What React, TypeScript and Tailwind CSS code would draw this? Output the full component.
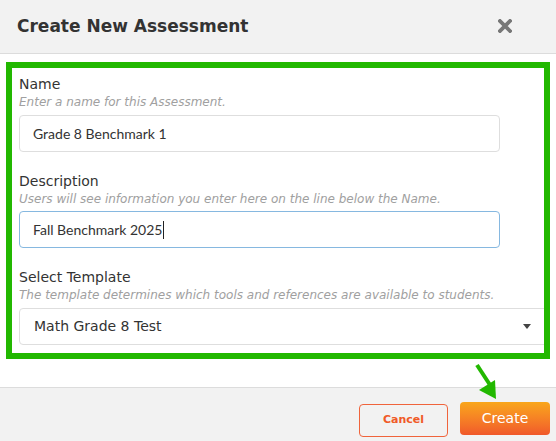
import React from 'react';

const Field: React.FC<{ label: string; hint: string; className?: string; children: React.ReactNode }> = ({
  label,
  hint,
  className,
  children,
}) => (
  <div className={className}>
    <div className="text-[14px] leading-[20px] text-[#333]">{label}</div>
    <div className="text-[12px] leading-[17px] italic text-[#a0a0a0]">{hint}</div>
    {children}
  </div>
);

const App: React.FC = () => {
  return (
    <div className="relative w-[556px] h-[441px] bg-white flex flex-col overflow-hidden font-['DejaVu_Sans',sans-serif]">
      {/* header */}
      <div className="h-[54px] shrink-0 bg-[#f2f2f2] border-b border-[#dcdcdc] flex items-center justify-between pl-[17px] pr-[44px]">
        <h2 className="text-[17px] font-bold text-[#333]">Create New Assessment</h2>
        <svg width="14" height="14" viewBox="0 0 14 14" className="mt-[-1px]">
          <path d="M2 2 L12 12 M12 2 L2 12" stroke="#777" strokeWidth="3.8" strokeLinecap="square" />
        </svg>
      </div>

      {/* body */}
      <div className="pt-2 px-[6px] pb-[28px]">
        <div className="border-[6px] border-[#22b800] pt-[6px] pl-[7px] pb-[8px] overflow-hidden">
          <Field label="Name" hint="Enter a name for this Assessment.">
            <div className="mt-[4px] w-[481px] h-[37px] border border-[#dedede] rounded-[4px] flex items-center pl-[13px] font-['Lato',sans-serif] text-[14px] text-[#333]">
              Grade 8 Benchmark 1
            </div>
          </Field>

          <Field
            className="mt-[19px]"
            label="Description"
            hint="Users will see information you enter here on the line below the Name."
          >
            <div className="mt-[3px] w-[481px] h-[37px] border border-[#86b8e0] rounded-[4px] flex items-center pl-[13px] font-['Lato',sans-serif] text-[14px] text-[#333]">
              Fall Benchmark 2025
              <span className="inline-block w-px h-[18px] bg-[#222] ml-[1px]" />
            </div>
          </Field>

          <Field
            className="mt-[19px]"
            label="Select Template"
            hint="The template determines which tools and references are available to students."
          >
            <div className="mt-[4px] w-[560px] h-[37px] border border-[#dedede] rounded-l-[4px] flex items-center pl-[14px] text-[14px] text-[#333]">
              Math Grade 8 Test
              <svg width="8" height="5" viewBox="0 0 8 5" className="ml-[361px]">
                <path d="M0 0 H8 L4 5 Z" fill="#444" />
              </svg>
            </div>
          </Field>
        </div>
      </div>

      {/* footer */}
      <div className="flex-1 bg-[#f2f2f2] border-t border-[#dcdcdc] flex justify-end items-start gap-3 pt-[14px] pr-[6px]">
        <button className="mt-[2px] w-[89px] h-[33px] border border-[#f0643c] rounded-[4px] bg-transparent text-[11px] font-bold text-[#f05a28]">
          Cancel
        </button>
        <button className="w-[90px] h-[33px] rounded-[4px] bg-gradient-to-b from-[#f9a61a] to-[#f0582a] text-[14px] text-white">
          Create
        </button>
      </div>

      {/* annotation arrow */}
      <svg className="absolute left-[470px] top-[360px]" width="36" height="44" viewBox="0 0 36 44">
        <path d="M7 5 L22 28" stroke="#22b800" strokeWidth="4" strokeLinecap="butt" />
        <path d="M9 30 L25 20 L26 39 Z" fill="#22b800" />
      </svg>
    </div>
  );
};

export default App;
